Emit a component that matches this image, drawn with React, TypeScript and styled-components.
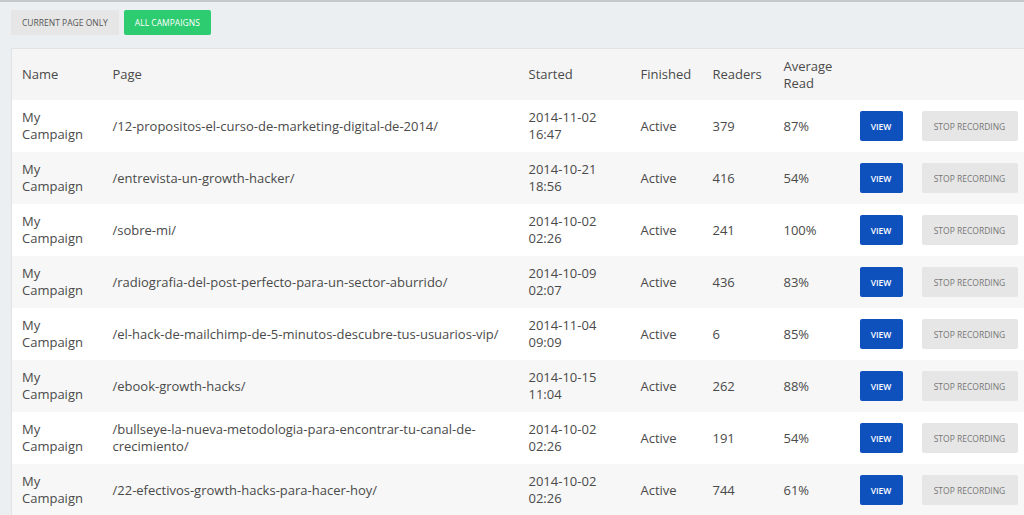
import React from "react";
import styled, { createGlobalStyle } from "styled-components";

const Global = createGlobalStyle`
  html, body { margin: 0; padding: 0; background: #eceff1; overflow: hidden; }
  body { font-family: "Open Sans", "Liberation Sans", sans-serif; }
`;

const Page = styled.div`
  border-top: 2px solid #c5c8ca;
  padding: 8px 0 0 11px;
  height: 515px;
  box-sizing: border-box;
  overflow: hidden;
`;

const Toolbar = styled.div`
  display: flex;
  gap: 5px;
  margin-bottom: 13px;
`;

const FilterButton = styled.button<{ $active?: boolean }>`
  border: none;
  border-radius: 2px;
  height: 25px;
  padding: 0 11px;
  font-family: inherit;
  font-size: 8.5px;
  text-transform: uppercase;
  background: ${p => (p.$active ? "#2ecc71" : "#e6e6e6")};
  color: ${p => (p.$active ? "#fff" : "#555")};
`;

const Table = styled.table`
  width: 1030px;
  border-collapse: collapse;
  table-layout: fixed;
  font-size: 13px;
  color: #4a4a4a;
  border-left: 1px solid #e0e3e5;
  border-top: 1px solid #e0e3e5;
`;

const Th = styled.th`
  text-align: left;
  font-weight: 400;
  padding: 0 10px;
  height: 51px;
  line-height: 17px;
  background: #f5f5f5;
`;

const Row = styled.tr<{ $alt: boolean }>`
  background: ${p => (p.$alt ? "#f7f7f7" : "#fff")};
`;

const Td = styled.td`
  padding: 0 10px;
  height: 52px;
  line-height: 17px;
  vertical-align: middle;
`;

const ViewButton = styled.button`
  border: none;
  border-radius: 2px;
  width: 43px;
  height: 30px;
  background: #0e51bd;
  color: #fff;
  font-family: inherit;
  font-weight: 600;
  font-size: 8.5px;
`;

const StopButton = styled.button`
  border: none;
  border-radius: 2px;
  width: 96px;
  height: 30px;
  background: #e6e6e6;
  color: #777;
  font-family: inherit;
  font-size: 8.5px;
  white-space: nowrap;
`;

const rows = [
  ["/12-propositos-el-curso-de-marketing-digital-de-2014/", "2014-11-02", "16:47", "379", "87%"],
  ["/entrevista-un-growth-hacker/", "2014-10-21", "18:56", "416", "54%"],
  ["/sobre-mi/", "2014-10-02", "02:26", "241", "100%"],
  ["/radiografia-del-post-perfecto-para-un-sector-aburrido/", "2014-10-09", "02:07", "436", "83%"],
  ["/el-hack-de-mailchimp-de-5-minutos-descubre-tus-usuarios-vip/", "2014-11-04", "09:09", "6", "85%"],
  ["/ebook-growth-hacks/", "2014-10-15", "11:04", "262", "88%"],
  ["/bullseye-la-nueva-metodologia-para-encontrar-tu-canal-de-crecimiento/", "2014-10-02", "02:26", "191", "54%"],
  ["/22-efectivos-growth-hacks-para-hacer-hoy/", "2014-10-02", "02:26", "744", "61%"],
];

export default function App() {
  return (
    <Page>
      <Global />
      <Toolbar>
        <FilterButton>Current page only</FilterButton>
        <FilterButton $active>All campaigns</FilterButton>
      </Toolbar>
      <Table>
        <colgroup>
          <col style={{ width: 91 }} />
          <col style={{ width: 416 }} />
          <col style={{ width: 112 }} />
          <col style={{ width: 72 }} />
          <col style={{ width: 71 }} />
          <col style={{ width: 76 }} />
          <col style={{ width: 62 }} />
          <col style={{ width: 130 }} />
        </colgroup>
        <thead>
          <tr>
            <Th>Name</Th>
            <Th>Page</Th>
            <Th>Started</Th>
            <Th>Finished</Th>
            <Th>Readers</Th>
            <Th>Average Read</Th>
            <Th />
            <Th />
          </tr>
        </thead>
        <tbody>
          {rows.map((r, i) => (
            <Row key={i} $alt={i % 2 === 1}>
              <Td>My Campaign</Td>
              <Td>{r[0]}</Td>
              <Td>{r[1]}<br />{r[2]}</Td>
              <Td>Active</Td>
              <Td>{r[3]}</Td>
              <Td>{r[4]}</Td>
              <Td><ViewButton>VIEW</ViewButton></Td>
              <Td><StopButton>STOP RECORDING</StopButton></Td>
            </Row>
          ))}
        </tbody>
      </Table>
    </Page>
  );
}
